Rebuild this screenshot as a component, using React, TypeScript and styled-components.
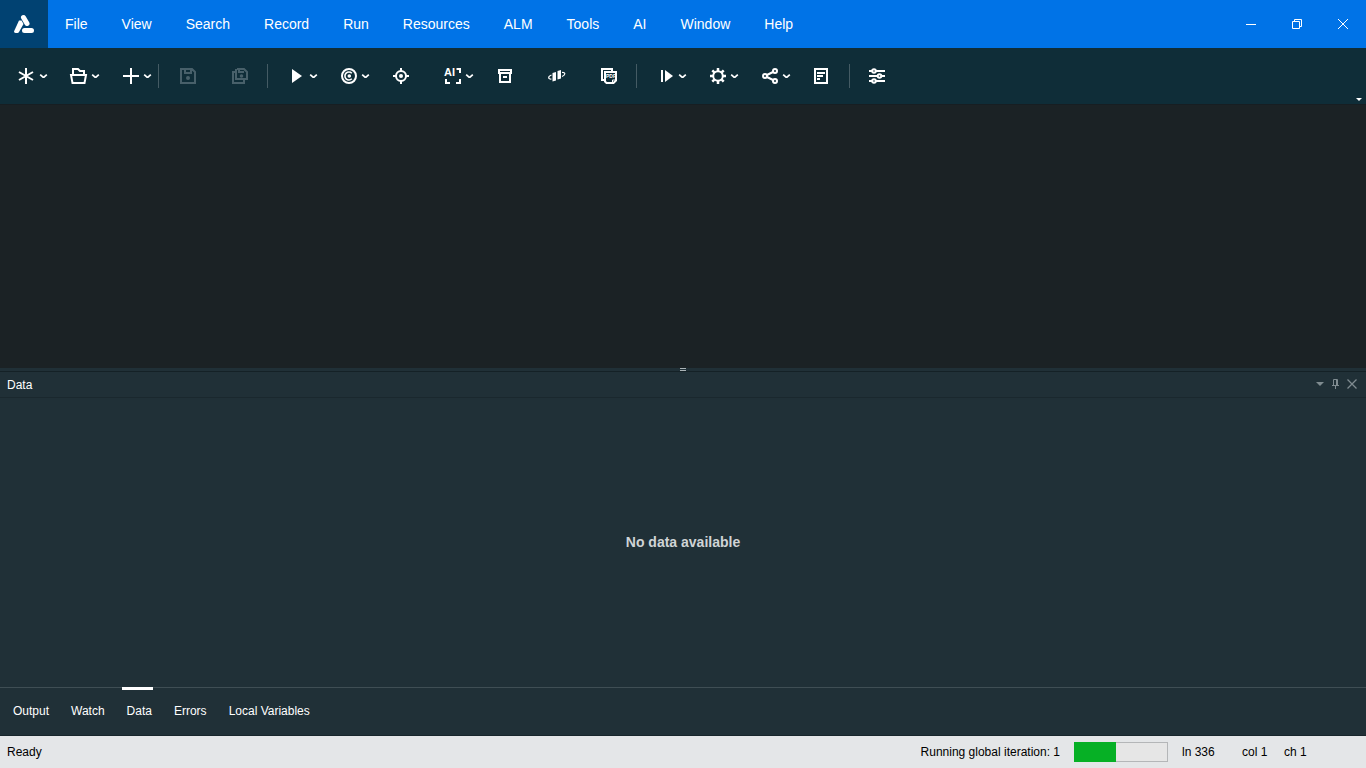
import React from 'react';
import styled, { createGlobalStyle } from 'styled-components';

const GlobalStyle = createGlobalStyle`
  * { box-sizing: border-box; }
  body { margin: 0; font-family: "Liberation Sans", Arial, sans-serif; }
  button { border: 0; padding: 0; background: none; color: inherit; font: inherit; cursor: pointer; }
`;

const Shell = styled.div`
  display: flex;
  flex-direction: column;
  height: 100vh;
  color: #fff;
  background: #203037;
`;

const TitleBar = styled.header`
  display: flex;
  height: 48px;
  flex: none;
  background: #0073e7;
`;

const Brand = styled.div`
  display: grid;
  place-items: center;
  width: 48px;
  background: #014272;
`;

const Menu = styled.nav`
  display: flex;
  flex: 1;
`;

const MenuButton = styled.button`
  padding: 0 17px;
  font-size: 14px;
  line-height: 16px;
`;

const WindowButton = styled.button`
  display: grid;
  place-items: center;
  width: 46px;
`;

const Toolbar = styled.div`
  display: flex;
  align-items: center;
  height: 56px;
  flex: none;
  background: #0f2d38;
`;

const ToolButton = styled.button`
  display: flex;
  align-items: center;
  width: 52px;
  height: 40px;
  padding-left: 16px;
  gap: 3px;
  color: #fff;

  &:disabled { color: #48606a; }
`;

const Separator = styled.span`
  width: 1px;
  height: 24px;
  margin: 0 2px;
  background: #445b64;
`;

const Overflow = styled.button`
  display: grid;
  place-items: center;
  align-self: flex-end;
  width: 14px;
  height: 10px;
  margin-left: auto;
`;

const Editor = styled.main`
  flex: 264 1 0;
  background: #1b2225;
  border-top: 1px solid #171e22;
`;

const Splitter = styled.div`
  display: grid;
  place-items: end center;
  height: 4px;
  flex: none;
  border-bottom: 1px solid #142126;
`;

const Grip = styled.span`
  width: 6px;
  height: 3px;
  border: solid #aab3b6;
  border-width: 1px 0;
`;

const PanelHeader = styled.div`
  display: flex;
  align-items: center;
  height: 26px;
  flex: none;
  padding: 0 6px 0 7px;
  border-bottom: 1px solid #1a282e;
`;

const PanelTitle = styled.h2`
  flex: 1;
  margin: 0;
  font-size: 12px;
  font-weight: 400;
  line-height: 14px;
`;

const PanelButton = styled.button`
  display: grid;
  place-items: center;
  width: 16px;
  height: 18px;
  padding-bottom: 2px;
  color: #7f8b90;
`;

const PanelBody = styled.section`
  display: grid;
  place-items: center;
  flex: 289 1 0;
  padding-bottom: 1px;
  color: #d0d4d6;
  font-size: 14px;
  font-weight: 700;
  line-height: 16px;
`;

const Tabs = styled.div`
  display: flex;
  gap: 16px;
  height: 49px;
  flex: none;
  padding-left: 8px;
  border-top: 1px solid #3f4e54;
  border-bottom: 1px solid #17252b;
`;

const Tab = styled.button<{ $active: boolean }>`
  padding: 0 1px 0 5px;
  margin-top: -1px;
  font-size: 12px;
  line-height: 14px;
  border-top: 3px solid ${({ $active }) => ($active ? '#fff' : 'transparent')};
  border-bottom: 3px solid transparent;
`;

const StatusBar = styled.footer`
  display: flex;
  align-items: center;
  height: 32px;
  flex: none;
  padding-left: 7px;
  color: #000;
  background: #e4e6e8;
  font-size: 12px;
  line-height: 14px;
`;

const Ready = styled.span`
  flex: 1;
`;

const Progress = styled.progress`
  appearance: none;
  width: 94px;
  height: 20px;
  margin: 0 14px;

  &::-webkit-progress-bar {
    background: #e6e6e6;
    box-shadow: inset 0 0 0 1px #b4b6b8;
  }
  &::-webkit-progress-value { background: #06b025; }
`;

const Position = styled.span<{ $width: number }>`
  width: ${({ $width }) => $width}px;
`;

const Svg = styled.svg<{ $stroke?: number }>`
  display: block;
  flex: none;
  fill: none;
  stroke: currentColor;
  stroke-width: ${({ $stroke = 2 }) => $stroke};
`;

const icons: Record<string, React.ReactNode> = {
  New: <path d="M10 2v16M3 6l14 8M3 14l14-8" />,
  Open: <path d="M5 8.500V3h5l2 2h4v3.500M3 9h15l-1.500 8h-12z" />,
  Add: <path d="M11 2v16M3 10h16" />,
  Save: (
    <>
      <path d="M4 3h11l3 3v11H4zM8 3v4h6V3" />
      <circle cx="11" cy="12" r="2" fill="currentColor" stroke="none" />
    </>
  ),
  'Save all': (
    <>
      <path d="M8 3h7l3 3v7H7V3M10 3v3h5" />
      <path d="M7 6H4v11h11v-3" />
      <circle cx="12.5" cy="10" r="1.800" fill="currentColor" stroke="none" />
    </>
  ),
  Run: <path d="M6 3l10 7-10 7z" fill="currentColor" stroke="none" />,
  Record: (
    <>
      <circle cx="11" cy="10" r="7" />
      <path d="M13.800 7.200a4 4 0 1 0 0 5.600" strokeWidth="1.600" />
      <circle cx="11.300" cy="10" r="1.800" fill="currentColor" stroke="none" />
    </>
  ),
  'Object spy': (
    <>
      <circle cx="11" cy="10" r="5" />
      <circle cx="11" cy="10" r="2" fill="currentColor" stroke="none" />
      <path d="M11 2v3M11 15v3M3 10h3M16 10h3" />
    </>
  ),
  'AI inspection': (
    <>
      <text x="2" y="10" fontSize="11" fontWeight="700" fontFamily="Liberation Sans" fill="currentColor" stroke="none">AI</text>
      <path d="M14.500 3H18v4M4 13v4h4M14 17h4v-4" />
    </>
  ),
  Archive: <path d="M5 4h12v3H5zM6 7v9h10V7M9 11h4" />,
  Insight: (
    <>
      <path d="M6.500 7l3.500-1v8.500l-3.500 1zM11.500 5l3.500-1v8.500l-3.500 1z" fill="currentColor" stroke="none" />
      <path d="M5.500 9c-4 1.500-3.500 4.500 0 4M16 6.500c4-.5 3.500 2.500 0 4" strokeWidth="1.200" />
    </>
  ),
  PDF: (
    <>
      <path d="M6 14H4V3h10v2" />
      <path d="M7 6h11v8.500L15.500 17H8.500L7 15.500z" />
      <path d="M14.500 17v-3H18" strokeWidth="1" />
      <text x="8" y="12" fontSize="5" fontWeight="700" fill="currentColor" stroke="none">PDF</text>
    </>
  ),
  Step: (
    <>
      <path d="M7 4v12" />
      <path d="M10 4l8 6-8 6z" fill="currentColor" stroke="none" />
    </>
  ),
  Settings: (
    <>
      <circle cx="11" cy="10" r="4.800" />
      <path d="M11 2v3M11 15v3M3 10h3M16 10h3M5.300 4.300l2 2M14.700 13.700l2 2M5.300 15.700l2-2M14.700 6.300l2-2" strokeWidth="2.500" />
    </>
  ),
  Share: (
    <>
      <path d="M8 9l6-3M8 11l6 3" />
      <circle cx="6" cy="10" r="2" />
      <circle cx="16" cy="5" r="2" />
      <circle cx="16" cy="15" r="2" />
    </>
  ),
  Report: <path d="M4 3h12v14H4zM6 7h8M6 10h6M6 13h3" />,
  Options: (
    <>
      <path d="M1 5h3M8 5h9M1 10h8M13 10h4M1 15h3M8 15h9" />
      <circle cx="6" cy="5" r="1.800" />
      <circle cx="11.500" cy="10" r="1.800" />
      <circle cx="6" cy="15" r="1.800" />
    </>
  ),
};

type Tool = { name: string; menu?: boolean; off?: boolean };

const toolGroups: Tool[][] = [
  [{ name: 'New', menu: true }, { name: 'Open', menu: true }, { name: 'Add', menu: true }],
  [{ name: 'Save', off: true }, { name: 'Save all', off: true }],
  [
    { name: 'Run', menu: true },
    { name: 'Record', menu: true },
    { name: 'Object spy' },
    { name: 'AI inspection', menu: true },
    { name: 'Archive' },
    { name: 'Insight' },
    { name: 'PDF' },
  ],
  [{ name: 'Step', menu: true }, { name: 'Settings', menu: true }, { name: 'Share', menu: true }, { name: 'Report' }],
  [{ name: 'Options' }],
];

const menus = ['File', 'View', 'Search', 'Record', 'Run', 'Resources', 'ALM', 'Tools', 'AI', 'Window', 'Help'];
const tabs = ['Output', 'Watch', 'Data', 'Errors', 'Local Variables'];

export default function App() {
  const [active, setActive] = React.useState('Data');

  return (
    <Shell>
      <GlobalStyle />
      <TitleBar>
        <Brand>
          <Svg width="20" height="20" viewBox="0 0 20 20" $stroke={5} strokeLinecap="round">
            <path d="M9.500 3.500L13 9.500M10.500 16.500h7" />
            <path d="M5 6.500h2.500l2 3.500-4.500 8a2 2 0 0 1-1.500 1H1.500a1.500 1.500 0 0 1-1.300-2z" fill="currentColor" stroke="none" />
          </Svg>
        </Brand>
        <Menu aria-label="Main menu">
          {menus.map((m) => (
            <MenuButton key={m}>{m}</MenuButton>
          ))}
        </Menu>
        <WindowButton aria-label="Minimize">
          <Svg width="10" height="10" viewBox="0 0 10 10" $stroke={1}>
            <path d="M0 5.500h10" />
          </Svg>
        </WindowButton>
        <WindowButton aria-label="Restore">
          <Svg width="10" height="10" viewBox="0 0 10 10" $stroke={1}>
            <path d="M.5 2.500h7v7h-7zM2.500 2.500v-2h7v7h-2" />
          </Svg>
        </WindowButton>
        <WindowButton aria-label="Close">
          <Svg width="10" height="10" viewBox="0 0 10 10" $stroke={1}>
            <path d="M0 0l10 10M10 0L0 10" />
          </Svg>
        </WindowButton>
      </TitleBar>

      <Toolbar role="toolbar">
        {toolGroups.map((group, i) => (
          <React.Fragment key={i}>
            {i > 0 && <Separator />}
            {group.map((t) => (
              <ToolButton key={t.name} aria-label={t.name} disabled={t.off}>
                <Svg width="20" height="20" viewBox="0 0 20 20">{icons[t.name]}</Svg>
                {t.menu && (
                  <Svg width="9" height="8" viewBox="0 0 9 8" $stroke={1.7}>
                    <path d="M1.200 2.600l2.800 2.600h1l2.800-2.600" />
                  </Svg>
                )}
              </ToolButton>
            ))}
          </React.Fragment>
        ))}
        <Overflow aria-label="More tools">
          <Svg width="6" height="3" viewBox="0 0 6 3">
            <path d="M0 0h6L3 3z" fill="currentColor" stroke="none" />
          </Svg>
        </Overflow>
      </Toolbar>

      <Editor />
      <Splitter>
        <Grip />
      </Splitter>

      <PanelHeader>
        <PanelTitle>Data</PanelTitle>
        <PanelButton aria-label="Panel menu">
          <Svg width="8" height="4" viewBox="0 0 8 4">
            <path d="M0 0h8L4 4z" fill="currentColor" stroke="none" />
          </Svg>
        </PanelButton>
        <PanelButton aria-label="Pin panel">
          <Svg width="8" height="10" viewBox="0 0 8 10" $stroke={1}>
            <path d="M1.500 6.500v-6h4v6M4.500 0v6M0 6.500h7M3.500 7v3" />
          </Svg>
        </PanelButton>
        <PanelButton aria-label="Close panel">
          <Svg width="10" height="10" viewBox="0 0 10 10" $stroke={1.3}>
            <path d="M.5.5l9 9M9.500.5l-9 9" />
          </Svg>
        </PanelButton>
      </PanelHeader>

      <PanelBody>No data available</PanelBody>

      <Tabs role="tablist">
        {tabs.map((t) => (
          <Tab key={t} role="tab" aria-selected={t === active} $active={t === active} onClick={() => setActive(t)}>
            {t}
          </Tab>
        ))}
      </Tabs>

      <StatusBar>
        <Ready>Ready</Ready>
        <label htmlFor="iteration">Running global iteration: 1</label>
        <Progress id="iteration" max={94} value={42} />
        <Position $width={60}>ln 336</Position>
        <Position $width={42}>col 1</Position>
        <Position $width={82}>ch 1</Position>
      </StatusBar>
    </Shell>
  );
}
